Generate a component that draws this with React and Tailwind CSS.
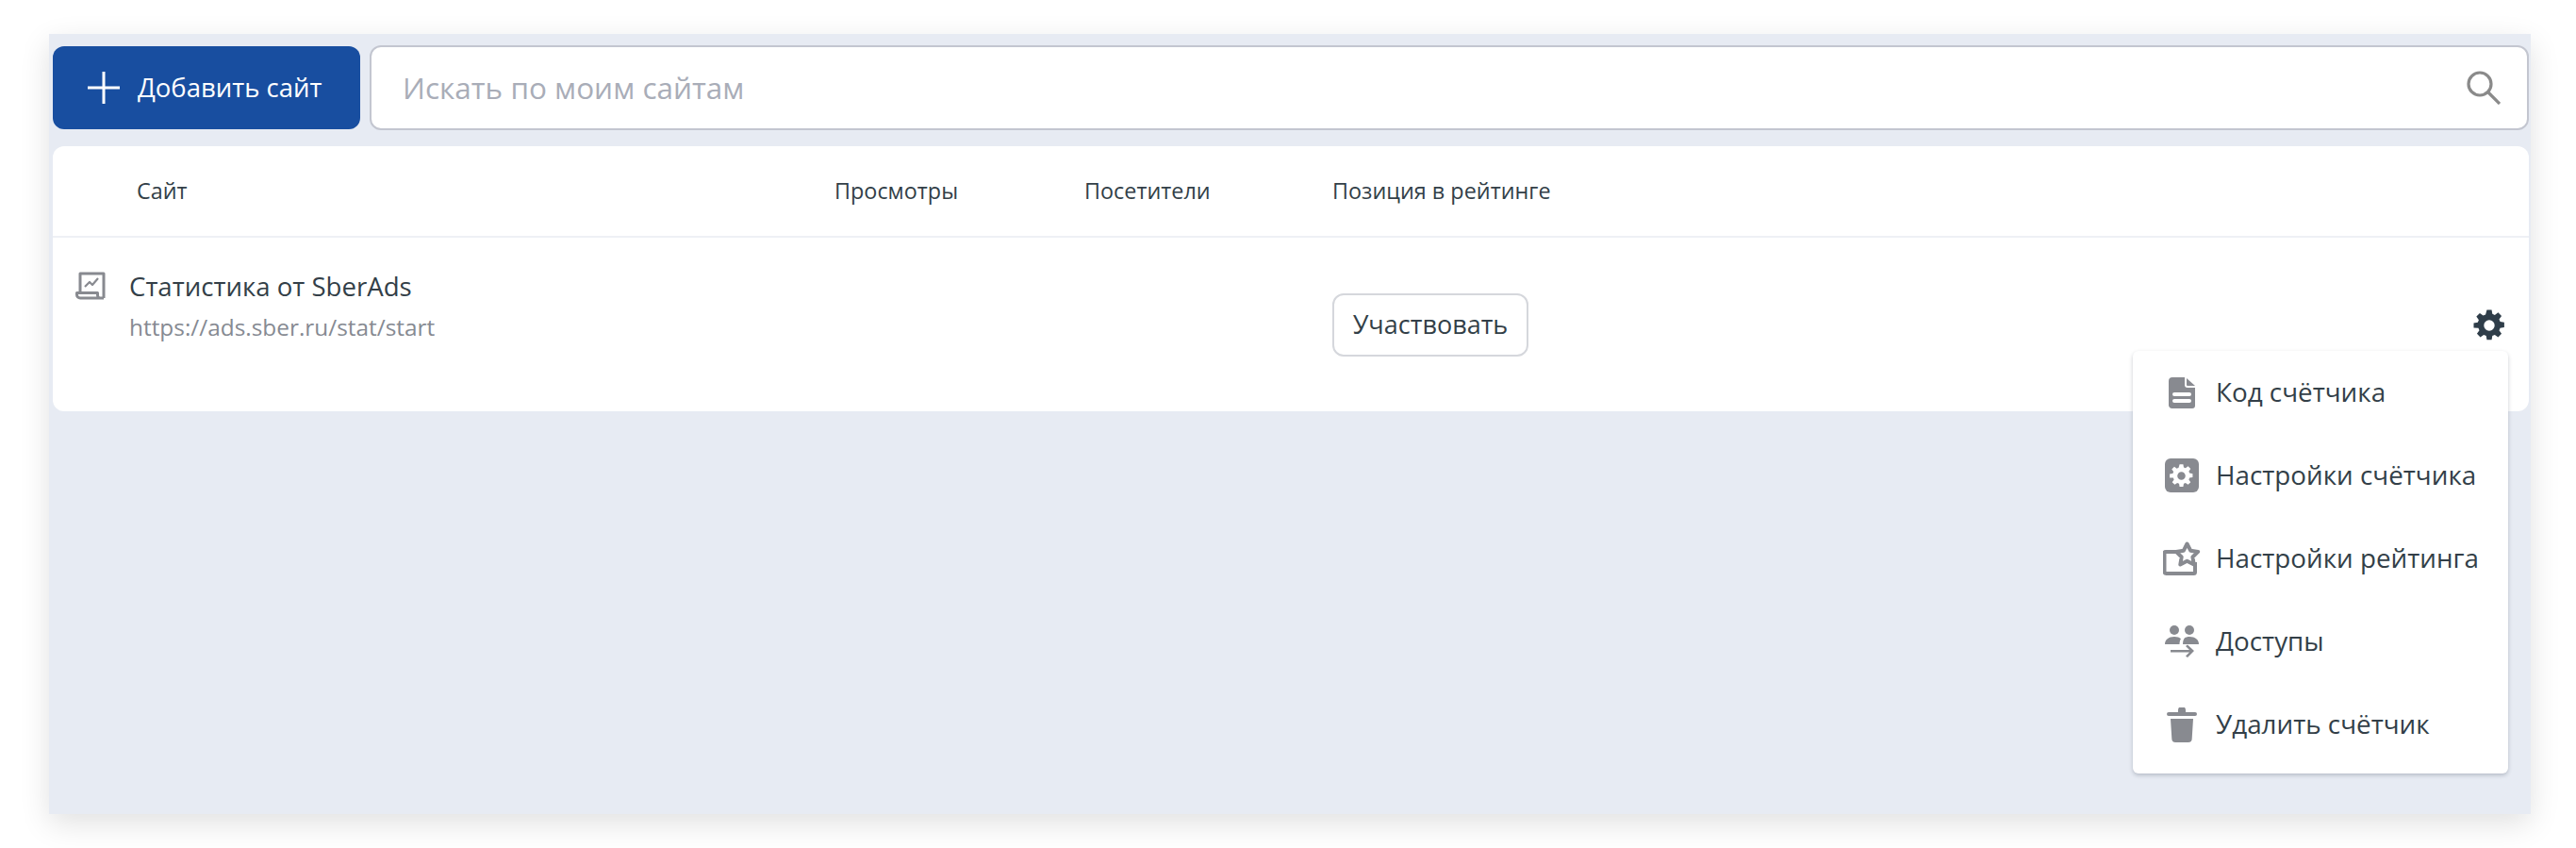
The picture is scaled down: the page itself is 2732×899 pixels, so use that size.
import React from 'react';

const FONT = "font-['Open_Sans','Noto_Sans',sans-serif]";

function FileIcon() {
  return (
    <svg width="28" height="33" viewBox="0 0 28 33" fill="#888a90">
      <path fillRule="evenodd" d="M4 0h13v8a3 3 0 0 0 3 3h8v19a3 3 0 0 1-3 3H4a4 4 0 0 1-4-3V4a4 4 0 0 1 4-4zM19 1l9 8h-8a1 1 0 0 1-1-1zM6 16a2 2 0 0 0 0 4h16a2 2 0 0 0 0-4zm0 7a2 2 0 0 0 0 4h16a2 2 0 0 0 0-4z" />
    </svg>
  );
}

// 8 tooth cog, wide teeth and a small hole
const COG = "M10.300 1h3.400l.5 2.900 1.700.7 2.400-1.700 2.400 2.400-1.700 2.400.7 1.700 2.900.5v3.400l-2.900.5-.7 1.700 1.700 2.400-2.400 2.400-2.400-1.700-1.700.7-.5 2.900h-3.400l-.5-2.900-1.700-.7-2.400 1.700-2.400-2.400 1.700-2.400-.7-1.700L1 13.700v-3.400l2.900-.5.7-1.700-1.700-2.400 2.400-2.400 2.400 1.700 1.700-.7zM12 8.200a3.800 3.800 0 1 0 0 7.600 3.800 3.800 0 0 0 0-7.600z";

function SettingsIcon() {
  return (
    <span className="w-9 h-9 rounded-md bg-[#888a90] flex items-center justify-center">
      <svg width="27" height="27" viewBox="0 0 24 24" fill="#ffffff" fillRule="evenodd"><path d={COG} /></svg>
    </span>
  );
}

function RatingIcon() {
  return (
    <svg width="40" height="36" viewBox="0 0 40 36" fill="none" stroke="#888a90" strokeWidth="4" strokeLinejoin="round">
      <path d="M17 11H3a1.500 1.500 0 0 0-1.500 1.500V32a2 2 0 0 0 2 2h29a1.500 1.500 0 0 0 1.500-1.500V22" />
      <path d="M25.500 2.500l3.700 7.200 8 1.200-5.800 5.600 1.400 8-7.300-3.800-7.200 3.800 1.400-8-5.800-5.600 8-1.200z" fill="#ffffff" />
    </svg>
  );
}

function UsersIcon() {
  return (
    <svg width="36" height="35" viewBox="0 0 36 35" fill="#888a90">
      <circle cx="10" cy="5" r="5" />
      <circle cx="26" cy="5" r="5" />
      <path d="M0 20c0-5 4-8 10-8 3 0 5.500.8 7 2.300-1 1.300-1.500 3.200-1.500 5.700z" />
      <path d="M19 20c0-3 .6-5 1.800-6.500 1.300-1 3-1.500 5.200-1.500 6 0 10 3 10 8z" />
      <path d="M6 26h20l-4-4 2-1.500 7 6.500-7 7-2-1.500 4-4H6z" />
    </svg>
  );
}

function TrashIcon() {
  return (
    <svg width="32" height="37" viewBox="0 0 32 37" fill="#888a90">
      <path d="M12 3a4 4 0 0 1 8 0v2h10a2 2 0 0 1 0 4H2a2 2 0 0 1 0-4h10z" />
      <path d="M4 12h24l-1.300 21a4 4 0 0 1-4 4H9.300a4 4 0 0 1-4-4z" />
    </svg>
  );
}

const MENU = [
  { label: 'Код счётчика', icon: <FileIcon /> },
  { label: 'Настройки счётчика', icon: <SettingsIcon /> },
  { label: 'Настройки рейтинга', icon: <RatingIcon /> },
  { label: 'Доступы', icon: <UsersIcon /> },
  { label: 'Удалить счётчик', icon: <TrashIcon /> },
];

function App() {
  return (
    <div className={`min-h-[899px] bg-white pt-9 pl-[52px] pr-[48px] ${FONT}`}>
      <div className="relative h-[827px] bg-[#e7ebf3] pl-1 pr-0.5 pt-3 shadow-[0_10px_30px_rgba(0,0,0,0.12)]">
        {/* Toolbar */}
        <div className="flex items-center gap-2.5">
          <button className="w-[326px] h-[88px] rounded-xl bg-[#184ea0] flex items-center pl-[36px] gap-[18px] text-white text-[27.5px]">
            <svg width="36" height="36" viewBox="0 0 36 36" stroke="#ffffff" strokeWidth="3"><path d="M18 1v34M1 18h34" /></svg>
            Добавить сайт
          </button>
          <div className="flex-1 h-[90px] rounded-xl bg-white border-2 border-[#c3c6d0] flex items-center justify-between pl-[33px] pr-[28px]">
            <span className="text-[31.5px] text-[#a9adb8]">Искать по моим сайтам</span>
            <svg width="36" height="36" viewBox="0 0 36 36" fill="none" stroke="#8a8a8a" strokeWidth="3.2"><circle cx="14" cy="14" r="12" /><path d="M23 23l12 12" /></svg>
          </div>
        </div>

        {/* Table */}
        <div className="mt-[17px] h-[281px] rounded-xl bg-white">
          <div className="grid grid-cols-[829px_265px_263px_1fr] items-center h-[97px] border-b-2 border-[#eef0f5] text-[23.4px] text-[#333f48]">
            <div className="pl-[89px]">Сайт</div>
            <div>Просмотры</div>
            <div>Посетители</div>
            <div>Позиция в рейтинге</div>
          </div>
          <div className="grid grid-cols-[829px_265px_263px_1fr] h-[184px]">
            <div className="flex pl-6 pt-[33px] gap-[25px]">
              <svg className="mt-[3px]" width="32" height="30" viewBox="0 0 32 30" fill="none" stroke="#888a90" strokeWidth="3" strokeLinejoin="round">
                <path d="M5 22V2h25v26" />
                <path d="M30 28H5a3.500 3.500 0 0 1-3.500-3.500V22.500h22V25a3 3 0 0 0 3 3" />
                <path d="M10 16l5-5 3 3 6-7" strokeWidth="2.200" />
              </svg>
              <div>
                <div className="text-[27.6px] leading-9 text-[#333f48]">Статистика от SberAds</div>
                <div className="mt-2.5 text-[24.4px] leading-8 text-[#868a92]">https://ads.sber.ru/stat/start</div>
              </div>
            </div>
            <div />
            <div />
            <div className="flex items-start justify-between pt-[59px] pr-[24px]">
              <button className="w-[208px] h-[67px] rounded-xl border-2 border-[#d5d7dc] bg-white text-[27px] text-[#333f48]">Участвовать</button>
              <svg className="mt-[16px]" width="36" height="36" viewBox="0 0 24 24" fill="#2f3d49" fillRule="evenodd"><path d={COG} /></svg>
            </div>
          </div>
        </div>

        {/* Dropdown menu */}
        <div className="absolute left-[2210px] top-[336px] w-[398px] h-[448px] rounded-md bg-white pb-[9px] shadow-[0_2px_4px_rgba(40,50,70,0.25)]">
          {MENU.map((item) => (
            <div key={item.label} className="flex items-center h-[88px]">
              <span className="w-[88px] flex justify-center shrink-0 pl-[15px]">{item.icon}</span>
              <span className="text-[27.8px] leading-9 pb-0.5 text-[#333f48]">{item.label}</span>
            </div>
          ))}
        </div>
      </div>
    </div>
  );
}

export default App;
